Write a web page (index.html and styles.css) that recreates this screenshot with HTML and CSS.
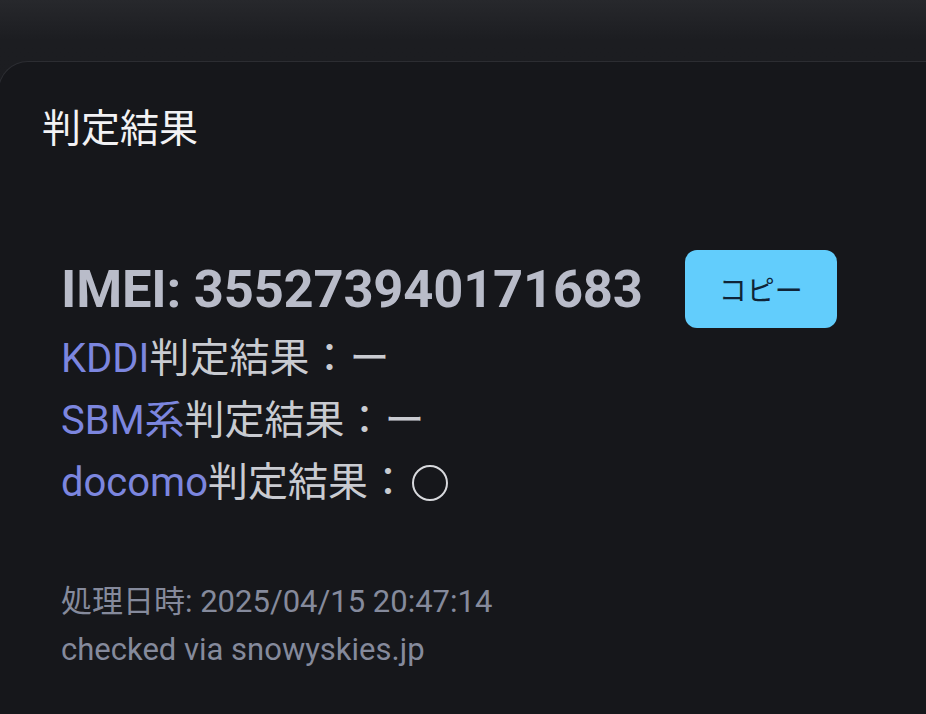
FILE: index.html
```html
<!DOCTYPE html>
<html lang="ja">
<head>
<meta charset="utf-8">
<title>判定結果</title>
<link rel="stylesheet" href="styles.css">
</head>
<body>
<div class="page">
  <div class="card">
    <h2 class="title">判定結果</h2>
    <div class="result">
      <div class="imei-row">
        <div class="imei">IMEI: 355273940171683</div>
        <button class="copy">コピー</button>
      </div>
      <div class="line"><span class="carrier">KDDI</span>判定結果：ー</div>
      <div class="line"><span class="carrier">SBM系</span>判定結果：ー</div>
      <div class="line"><span class="carrier">docomo</span>判定結果：<span class="circle"></span></div>
      <div class="meta">
        <div class="meta-line">処理日時: 2025/04/15 20:47:14</div>
        <div class="meta-line">checked via snowyskies.jp</div>
      </div>
    </div>
  </div>
</div>
</body>
</html>
```

FILE: styles.css
```css
html, body {
  margin: 0;
  padding: 0;
  height: 100%;
}
body {
  background: linear-gradient(to bottom, #27282c 0px, #1c1d21 40px, #1a1b1f 100%);
  font-family: Roboto, "Noto Sans CJK JP", sans-serif;
  overflow: hidden;
}
.page {
  padding-top: 61px;
  height: 100%;
  box-sizing: border-box;
}
.card {
  margin-left: -2px;
  margin-right: -30px;
  height: 100%;
  background: #16171b;
  border-top: 1.5px solid #2c2d32;
  border-left: 1.5px solid #2c2d32;
  border-top-left-radius: 30px;
  padding: 0 0 0 43px;
  box-sizing: border-box;
}
.title {
  margin: 0;
  padding-top: 38px;
  font-family: "Noto Sans CJK JP", sans-serif;
  font-weight: 400;
  font-size: 39px;
  line-height: 50px;
  color: #f2f2f4;
}
.result {
  padding-left: 19px;
  padding-top: 100px;
}
.imei-row {
  display: flex;
  align-items: center;
  gap: 44px;
  height: 78px;
}
.imei {
  font-weight: 700;
  font-size: 52.5px;
  color: #b9bcc9;
  letter-spacing: -0.2px;
}
.copy {
  width: 152px;
  height: 78px;
  margin-left: -2px;
  border: none;
  border-radius: 12px;
  background: #62cdfc;
  color: #0f2437;
  font-family: "Noto Sans CJK JP", sans-serif;
  font-size: 28px;
  padding: 0;
}
.line {
  font-size: 40px;
  line-height: 63px;
  color: #c9cbd1;
  display: flex;
  align-items: center;
  margin-top: -1px;
}
.carrier {
  color: #7c86df;
}
.circle {
  display: inline-block;
  width: 36px;
  height: 36px;
  border: 2.5px solid #d8d9dd;
  border-radius: 50%;
  box-sizing: border-box;
  margin-left: 4px;
}
.meta {
  margin-top: 64px;
}
.meta-line {
  font-size: 31px;
  line-height: 48px;
  color: #858a9c;
}
```
